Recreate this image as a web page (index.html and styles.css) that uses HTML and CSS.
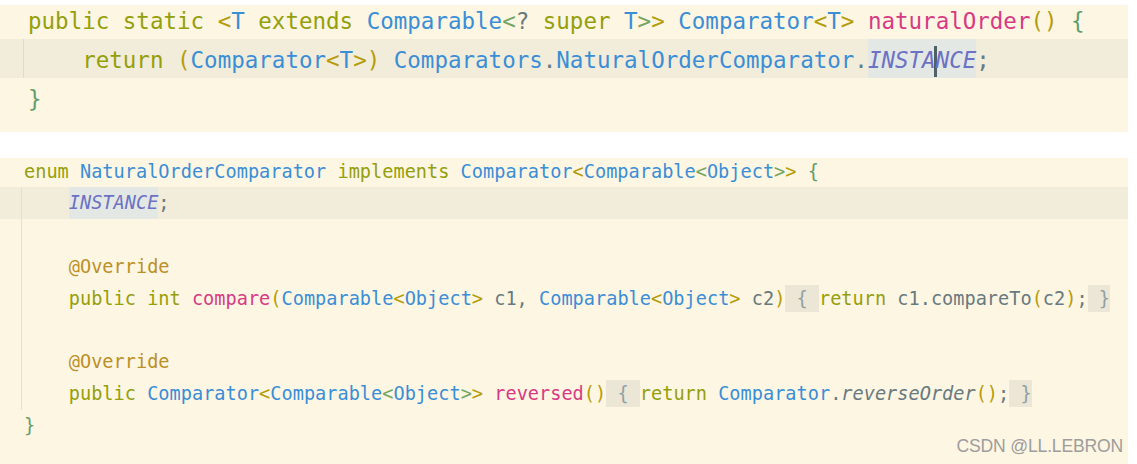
FILE: index.html
```html
<!DOCTYPE html>
<html>
<head>
<meta charset="utf-8">
<link rel="stylesheet" href="styles.css">
</head>
<body>
<div class="panel panel-top">
  <div class="lines">
    <div class="row"><span class="kw">public static </span><span class="b1">&lt;</span><span class="ty">T</span><span class="kw"> extends </span><span class="ty">Comparable</span><span class="b2">&lt;</span><span class="df">?</span><span class="kw"> super </span><span class="ty">T</span><span class="b2">&gt;</span><span class="b1">&gt;</span> <span class="ty">Comparator</span><span class="b1">&lt;</span><span class="ty">T</span><span class="b1">&gt;</span> <span class="fn">naturalOrder</span><span class="pr">()</span> <span class="br">{</span></div>
    <div class="row current guided">    <span class="kw">return </span><span class="pr">(</span><span class="ty">Comparator</span><span class="b1">&lt;</span><span class="ty">T</span><span class="b1">&gt;</span><span class="pr">)</span> <span class="ty">Comparators</span><span class="df">.</span><span class="ty">NaturalOrderComparator</span><span class="df">.</span><span class="const sel">INSTA<span class="caret"></span>NCE</span><span class="df">;</span></div>
    <div class="row"><span class="br">}</span></div>
  </div>
</div>
<div class="panel panel-bottom">
  <div class="lines">
    <div class="row"><span class="kw">enum </span><span class="ty">NaturalOrderComparator</span><span class="kw"> implements </span><span class="ty">Comparator</span><span class="b1">&lt;</span><span class="ty">Comparable</span><span class="b2">&lt;</span><span class="ty">Object</span><span class="b2">&gt;</span><span class="b1">&gt;</span> <span class="br">{</span></div>
    <div class="block">
      <div class="row current">    <span class="const sel">INSTANCE</span><span class="df">;</span></div>
      <div class="row"> </div>
      <div class="row">    <span class="an">@Override</span></div>
      <div class="row">    <span class="kw">public int </span><span class="fn">compare</span><span class="pr">(</span><span class="ty">Comparable</span><span class="b1">&lt;</span><span class="ty">Object</span><span class="b1">&gt;</span><span class="df"> c1, </span><span class="ty">Comparable</span><span class="b1">&lt;</span><span class="ty">Object</span><span class="b1">&gt;</span><span class="df"> c2</span><span class="pr">)</span><span class="fold"> { </span><span class="kw">return </span><span class="df">c1.compareTo</span><span class="pr">(</span><span class="df">c2</span><span class="pr">)</span><span class="df">;</span><span class="fold"> }</span></div>
      <div class="row"> </div>
      <div class="row">    <span class="an">@Override</span></div>
      <div class="row">    <span class="kw">public </span><span class="ty">Comparator</span><span class="b1">&lt;</span><span class="ty">Comparable</span><span class="b2">&lt;</span><span class="ty">Object</span><span class="b2">&gt;</span><span class="b1">&gt;</span> <span class="fn">reversed</span><span class="pr">()</span><span class="fold"> { </span><span class="kw">return </span><span class="ty">Comparator</span><span class="df">.</span><span class="df it">reverseOrder</span><span class="pr">()</span><span class="df">;</span><span class="fold"> }</span></div>
    </div>
    <div class="row"><span class="br">}</span></div>
  </div>
  <div class="watermark">CSDN @LL.LEBRON</div>
</div>
</body>
</html>
```

FILE: styles.css
```css
html, body {
  margin: 0;
  padding: 0;
  background: #ffffff;
}
body {
  width: 1137px;
  height: 464px;
  overflow: hidden;
}
.panel {
  width: 1128px;
  background: #fdf6e3;
  overflow: hidden;
  position: relative;
  font-family: "DejaVu Sans Mono", "Liberation Mono", monospace;
  color: #677a80;
}
.panel-top {
  margin-top: 5px;
  height: 127px;
  font-size: 22.5px;
}
.panel-top .lines {
  margin-top: -5px;
}
.panel-top .row {
  box-sizing: border-box;
  height: 39px;
  padding-top: 3px;
  line-height: 36px;
  padding-left: 28px;
}
.panel-top .sel {
  padding-top: 3px;
  margin-top: -3px;
}
.panel-top .guided {
  background-image: linear-gradient(#e3dcc5, #e3dcc5);
  background-repeat: no-repeat;
  background-size: 1px 100%;
  background-position: 23px 0;
}
.panel-bottom {
  margin-top: 26px;
  height: 306px;
  font-size: 18.6px;
}
.panel-bottom .lines {
  margin-top: -2.5px;
}
.panel-bottom .row {
  box-sizing: border-box;
  height: 31.8px;
  padding-top: 1px;
  line-height: 30.8px;
  padding-left: 24px;
}
.panel-bottom .sel {
  padding-top: 1px;
  margin-top: -1px;
}
.row {
  white-space: pre;
}
.row.current {
  background-color: #f2ecdb;
}
.block {
  position: relative;
}
.block::before {
  content: "";
  position: absolute;
  left: 21px;
  top: 0;
  bottom: 0;
  width: 1px;
  background: #e6dfca;
  z-index: 1;
}
.kw { color: #949f0c; }
.ty { color: #3a8ed6; }
.fn { color: #d63b83; }
.pr { color: #b59c0a; }
.br { color: #5f9d6c; }
.b1 { color: #b59c0a; }
.b2 { color: #74a562; }
.df { color: #677a80; }
.an { color: #bb9028; }
.it { font-style: italic; }
.const {
  color: #6c71c4;
  font-style: italic;
}
.sel {
  display: inline-block;
  background: #e3e8e4;
}
.caret {
  display: inline-block;
  width: 3px;
  height: 31px;
  margin: 0 -1.5px;
  vertical-align: middle;
  background: #4f6164;
}
.fold {
  background: #ece6d6;
  color: #8fa0a4;
  padding: 3px 0;
}
.watermark {
  position: absolute;
  right: 5px;
  top: 278px;
  font-family: "Liberation Sans", Arial, sans-serif;
  font-size: 17.6px;
  color: #9d9d9d;
  letter-spacing: -0.2px;
}
```
